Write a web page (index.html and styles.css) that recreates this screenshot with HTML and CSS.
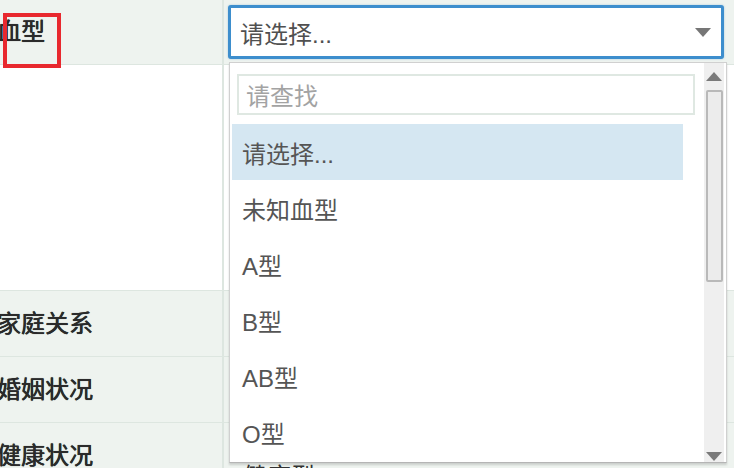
FILE: index.html
```html
<!DOCTYPE html>
<html lang="zh-CN">
<head>
<meta charset="utf-8">
<title>血型</title>
<link rel="stylesheet" href="styles.css">
</head>
<body>
<div class="form">
  <div class="label"><span>血型</span></div>
  <div class="field first">
    <div class="select"><span>请选择...</span><i class="caret"></i></div>
  </div>

  <div class="label blank"></div>
  <div class="field blank"></div>

  <div class="label"><span>家庭关系</span></div>
  <div class="field"></div>

  <div class="label"><span>婚姻状况</span></div>
  <div class="field"></div>

  <div class="label"><span>健康状况</span></div>
  <div class="field under"><span>健康型</span></div>

  <div class="mark"></div>

  <div class="dropdown">
    <div class="dd-main">
      <div class="search"><span>请查找</span></div>
      <ul class="options">
        <li class="active">请选择...</li>
        <li>未知血型</li>
        <li>A型</li>
        <li>B型</li>
        <li>AB型</li>
        <li>O型</li>
      </ul>
    </div>
    <div class="scrollbar">
      <i class="arrow up"></i>
      <div class="thumb"></div>
      <i class="arrow down"></i>
    </div>
  </div>
</div>
</body>
</html>
```

FILE: styles.css
```css
html, body {
  margin: 0;
  padding: 0;
}
body {
  width: 734px;
  height: 468px;
  overflow: hidden;
  background: #ffffff;
  font-family: "Liberation Sans", "Noto Sans CJK SC", sans-serif;
  font-size: 24px;
}
.form {
  position: relative;
  display: grid;
  grid-template-columns: 222px 1fr;
  grid-template-rows: 64px 225px 65px 65px 65px;
  gap: 1px 2px;
  background: #dde6e0;
}
.label {
  background: #eef3ef;
  display: flex;
  align-items: center;
  color: #2a2a2a;
  font-weight: normal;
  text-shadow: 0 0 0.7px #2a2a2a, 0.3px 0 0 #2a2a2a;
  overflow: hidden;
}
.label span {
  margin-left: -3px;
  line-height: 1;
}
.field {
  background: #eef3ef;
}
.blank {
  background: #ffffff;
}
.field.first {
  padding: 5px 0 0 4px;
}
.select {
  box-sizing: border-box;
  width: 496px;
  height: 54px;
  border: 3px solid #3d8ecd;
  border-radius: 3px;
  background: #ffffff;
  display: flex;
  align-items: center;
  padding-left: 9px;
  color: #505050;
  box-shadow: 0 0 2px rgba(61, 142, 205, 0.45);
}
.caret {
  margin-left: auto;
  margin-right: 10px;
  width: 0;
  height: 0;
  border-left: 8px solid transparent;
  border-right: 8px solid transparent;
  border-top: 9px solid #767676;
}
.field.under {
  padding: 42px 0 0 19px;
  overflow: hidden;
  color: #333333;
  line-height: 1;
}
.mark {
  position: absolute;
  left: 3px;
  top: 13px;
  width: 58px;
  height: 55px;
  box-sizing: border-box;
  border: 4px solid #e8282e;
}
.dropdown {
  position: absolute;
  left: 229px;
  top: 62px;
  width: 498px;
  height: 401px;
  box-sizing: border-box;
  border: 1px solid #d0d0d0;
  border-bottom-color: #b5b5b5;
  background: #ffffff;
  display: flex;
  box-shadow: 0 2px 2px rgba(0, 0, 0, 0.15);
}
.dd-main {
  flex: 1;
  padding: 11px 0 0 2px;
}
.search {
  box-sizing: border-box;
  margin: 0 9px 0 5px;
  height: 41px;
  border: 2px solid #dfe8e2;
  display: flex;
  align-items: center;
  padding-left: 7px;
  color: #a3a3a3;
}
.options {
  list-style: none;
  margin: 9px 21px 0 0;
  padding: 0;
  color: #555555;
}
.options li {
  height: 56px;
  display: flex;
  align-items: center;
  padding-left: 10px;
}
.options li.active {
  background: #d5e7f2;
}
.scrollbar {
  width: 20px;
  margin-right: 2px;
  background: #efefef;
  display: flex;
  flex-direction: column;
  align-items: center;
}
.arrow {
  width: 0;
  height: 0;
  border-left: 8px solid transparent;
  border-right: 8px solid transparent;
}
.arrow.up {
  margin-top: 9px;
  border-bottom: 9px solid #7a7a7a;
}
.arrow.down {
  margin-top: auto;
  margin-bottom: 1px;
  border-top: 9px solid #7a7a7a;
}
.thumb {
  box-sizing: border-box;
  margin-top: 9px;
  width: 17px;
  height: 192px;
  border: 2px solid #b9b9b9;
  border-radius: 2px;
  background: #ececec;
}
```
